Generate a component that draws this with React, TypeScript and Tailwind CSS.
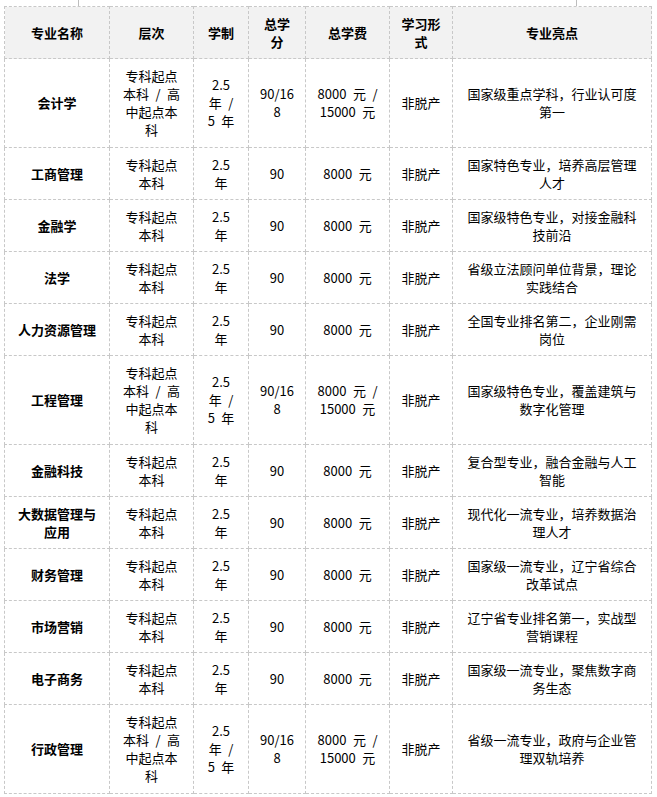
import React from 'react';

interface Row {
  name: string[];
  level: string[];
  years: string[];
  credits: string[];
  fee: string[];
  mode: string;
  highlight: string[];
  tall?: boolean;
}

// half-width spaces like the original bitmap font
const sp = (s: string) => s.replace(/ /g, '\u2002');

const SHORT_LEVEL = ['专科起点', '本科'];
const LONG_LEVEL = ['专科起点', '本科 / 高', '中起点本', '科'];

const short = (name: string[], highlight: string[]): Row => ({
  name,
  level: SHORT_LEVEL,
  years: ['2.5', '年'],
  credits: ['90'],
  fee: ['8000 元'],
  mode: '非脱产',
  highlight,
});

const long = (name: string[], highlight: string[]): Row => ({
  name,
  level: LONG_LEVEL,
  years: ['2.5', '年 /', '5 年'],
  credits: ['90/16', '8'],
  fee: ['8000 元 /', '15000 元'],
  mode: '非脱产',
  highlight,
  tall: true,
});

const rows: Row[] = [
  long(['会计学'], ['国家级重点学科，行业认可度', '第一']),
  short(['工商管理'], ['国家特色专业，培养高层管理', '人才']),
  short(['金融学'], ['国家级特色专业，对接金融科', '技前沿']),
  short(['法学'], ['省级立法顾问单位背景，理论', '实践结合']),
  short(['人力资源管理'], ['全国专业排名第二，企业刚需', '岗位']),
  long(['工程管理'], ['国家级特色专业，覆盖建筑与', '数字化管理']),
  short(['金融科技'], ['复合型专业，融合金融与人工', '智能']),
  short(['大数据管理与', '应用'], ['现代化一流专业，培养数据治', '理人才']),
  short(['财务管理'], ['国家级一流专业，辽宁省综合', '改革试点']),
  short(['市场营销'], ['辽宁省专业排名第一，实战型', '营销课程']),
  short(['电子商务'], ['国家级一流专业，聚焦数字商', '务生态']),
  long(['行政管理'], ['省级一流专业，政府与企业管', '理双轨培养']),
];

const headers: string[][] = [
  ['专业名称'],
  ['层次'],
  ['学制'],
  ['总学', '分'],
  ['总学费'],
  ['学习形', '式'],
  ['专业亮点'],
];

const Lines = ({ lines }: { lines: string[] }) => (
  <>
    {lines.map((l, i) => (
      <div key={i} className="whitespace-nowrap">
        {sp(l)}
      </div>
    ))}
  </>
);

const cell = 'border border-dashed border-[#c8c8c8] text-center align-middle px-1';

export default function App() {
  return (
    <div
      className="bg-white text-black text-[13px] leading-[18px] w-[657px] min-h-[797px]"
      style={{ fontFamily: '"Noto Sans CJK SC", "Noto Sans", sans-serif' }}
    >
      {/* bits of the block above */}
      <div className="ml-[78px] w-[499px] h-[6px] border-x border-[#bdbdbd]" />

      <table className="ml-[4px] w-[647px] table-fixed border-collapse">
        <colgroup>
          <col className="w-[105px]" />
          <col className="w-[84px]" />
          <col className="w-[55px]" />
          <col className="w-[57px]" />
          <col className="w-[84px]" />
          <col className="w-[63px]" />
          <col className="w-[199px]" />
        </colgroup>
        <thead>
          <tr className="h-[52px] bg-[#f2f2f2]">
            {headers.map((h, i) => (
              <th key={i} className={`${cell} font-bold`}>
                <Lines lines={h} />
              </th>
            ))}
          </tr>
        </thead>
        <tbody>
          {rows.map((r, i) => (
            <tr key={i} className={r.tall ? 'h-[89px]' : 'h-[52px]'}>
              <td className={`${cell} font-bold`}>
                <Lines lines={r.name} />
              </td>
              <td className={cell}>
                <Lines lines={r.level} />
              </td>
              <td className={cell}>
                <Lines lines={r.years} />
              </td>
              <td className={cell}>
                <Lines lines={r.credits} />
              </td>
              <td className={cell}>
                <Lines lines={r.fee} />
              </td>
              <td className={cell}>{r.mode}</td>
              <td className={cell}>
                <Lines lines={r.highlight} />
              </td>
            </tr>
          ))}
        </tbody>
      </table>
    </div>
  );
}
